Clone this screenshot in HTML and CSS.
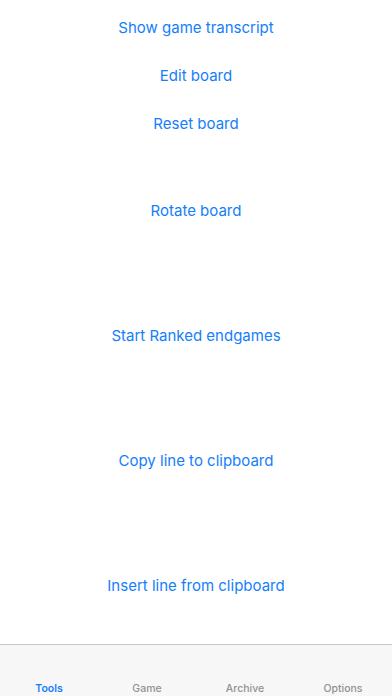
FILE: index.html
```html
<!DOCTYPE html>
<html lang="en">
<head>
    <meta charset="UTF-8">
    <meta name="viewport" content="width=device-width, initial-scale=1.0">
    <title>Tools</title>
    <link rel="stylesheet" href="styles.css">
</head>
<body>
    <div class="screen">
        <div class="actions">
            <a class="action">Show game transcript</a>
            <a class="action">Edit board</a>
            <a class="action">Reset board</a>
            <a class="action gap-sm">Rotate board</a>
            <a class="action gap-lg">Start Ranked endgames</a>
            <a class="action gap-lg">Copy line to clipboard</a>
            <a class="action gap-lg">Insert line from clipboard</a>
        </div>
        <div class="tabbar">
            <div class="tab active">Tools</div>
            <div class="tab">Game</div>
            <div class="tab">Archive</div>
            <div class="tab">Options</div>
        </div>
    </div>
</body>
</html>
```

FILE: styles.css
```css
* {
    margin: 0;
    padding: 0;
    box-sizing: border-box;
    font-family: Inter, 'Noto Sans', sans-serif;
}

body {
    background-color: #fff;
}

.screen {
    width: 392px;
    height: 696px;
    display: flex;
    flex-direction: column;
    overflow: hidden;
}

.actions {
    flex: 1;
    display: flex;
    flex-direction: column;
    align-items: center;
    padding-top: 4px;
}

.action {
    height: 48px;
    line-height: 48px;
    font-size: 15px;
    color: #147efb;
    cursor: pointer;
}

.gap-sm {
    margin-top: 39px;
}

.gap-lg {
    margin-top: 77px;
}

.tabbar {
    height: 52px;
    background-color: #f7f7f7;
    border-top: 1px solid #c8c8c8;
    display: grid;
    grid-template-columns: repeat(4, 1fr);
    align-items: end;
    padding-bottom: 1px;
}

.tab {
    text-align: center;
    font-size: 10.5px;
    font-weight: 500;
    color: #929292;
}

.tab.active {
    color: #147efb;
    font-weight: 600;
}
```
